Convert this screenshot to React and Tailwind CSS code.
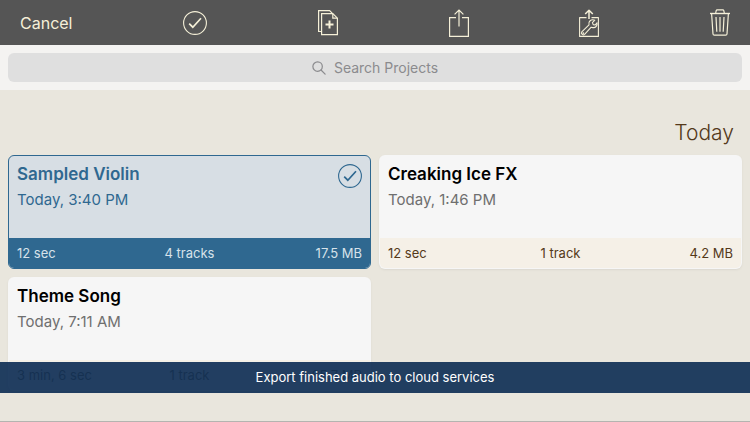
import clsx from 'clsx';

const projects = [
  { name: 'Sampled Violin', date: 'Today, 3:40 PM', length: '12 sec', tracks: '4 tracks', size: '17.5 MB', selected: true },
  { name: 'Creaking Ice FX', date: 'Today, 1:46 PM', length: '12 sec', tracks: '1 track', size: '4.2 MB' },
  { name: 'Theme Song', date: 'Today, 7:11 AM', length: '3 min, 6 sec', tracks: '1 track', size: '65.7 MB' },
];

export default function App() {
  return (
    <div className="relative flex min-h-screen flex-col border-b border-[#b4b4b0] bg-[#e9e6dd] font-['Inter',sans-serif]">
      <header className="flex h-[45px] items-center justify-between bg-[#555555] px-5 text-[#f5f0d8]">
        <button type="button" className="text-base">Cancel</button>
        <ToolButton label="Select all"><CheckCircle /></ToolButton>
        <ToolButton label="Duplicate"><DuplicateIcon /></ToolButton>
        <ToolButton label="Share"><ShareIcon /></ToolButton>
        <ToolButton label="Export options"><ExportIcon /></ToolButton>
        <ToolButton label="Delete"><TrashIcon /></ToolButton>
      </header>

      <SearchBar />

      <main className="px-2 pt-7">
        <h1 className="px-2 text-right text-[21px] leading-[29px] font-light text-[#54391a]">Today</h1>
        <div className="mt-2 grid grid-cols-2 gap-2">
          {projects.map(p => <ProjectCard key={p.name} project={p} />)}
        </div>
      </main>

      {/* Caption lies over the bottom of the list */}
      <p className="absolute inset-x-0 bottom-7 bg-[#113056]/93 text-center text-[13px] leading-[31px] text-white">
        Export finished audio to cloud services
      </p>
    </div>
  );
}

function ToolButton({ label, children }) {
  return <button type="button" aria-label={label} className="flex h-7 items-center">{children}</button>;
}

function SearchBar() {
  return (
    <div className="bg-[#f4f3f1] p-2">
      <label className="flex h-[29px] items-center justify-center gap-2 rounded-md bg-[#dfdfdf] text-[#8b8b8e]">
        <svg className="h-3.5 w-3.5" viewBox="0 0 16 16" fill="none" stroke="currentColor" strokeWidth="1.4" strokeLinecap="round">
          <circle cx="6.4" cy="6.4" r="5.4" />
          <path d="M10.3 10.3 15 15" />
        </svg>
        <input type="search" aria-label="Search Projects" placeholder="Search Projects"
          className="field-sizing-content bg-transparent text-sm outline-none placeholder:text-[#8b8b8e]" />
      </label>
    </div>
  );
}

function ProjectCard({ project }) {
  const { name, date, length, tracks, size, selected } = project;
  return (
    <article className={clsx(
      'overflow-hidden rounded-md border',
      selected ? 'border-[#2f6890] bg-[#d7dee4]' : 'border-transparent bg-[#f6f6f6] shadow-sm shadow-black/5'
    )}>
      <div className="flex h-[82px] items-start justify-between px-2 pt-2">
        <div>
          <h2 className={clsx('text-[17px] leading-5 font-semibold', selected ? 'text-[#2f6890]' : 'text-black')}>{name}</h2>
          <p className={clsx('mt-1 text-[15px] leading-6', selected ? 'text-[#2f6890]' : 'text-[#6f6f6f]')}>{date}</p>
        </div>
        {selected && <span className="text-[#2f6890]"><CheckCircle /></span>}
      </div>
      <div className={clsx('grid h-[30px] grid-cols-3 items-center px-2 pt-0.5 text-[13px]', selected ? 'bg-[#2f6890] text-[#d7e2ea]' : 'bg-[#f5f0e7] text-[#54391a]')}>
        <span>{length}</span>
        <span className="text-center">{tracks}</span>
        <span className="text-right">{size}</span>
      </div>
    </article>
  );
}

function CheckCircle() {
  return (
    <svg className="h-6 w-6" viewBox="0 0 24 24" fill="none" stroke="currentColor">
      <circle cx="12" cy="12" r="11.4" strokeWidth="1.1" />
      <path d="M6.2 12.6 9.8 16.2 18 7.2" strokeWidth="1.7" />
    </svg>
  );
}

function DuplicateIcon() {
  return (
    <svg className="h-[26px] w-5" viewBox="0 0 20 26" fill="none" stroke="currentColor" strokeWidth="1.2">
      <path d="M3.5 21.5H.6V.6H11.6L14.6 3.6" />
      <path d="M3.6 3.6H14.8L19.4 8.2V24.6H3.6Z" />
      <path d="M14.8 3.8V8.2H19.2" />
      <path d="M11.5 10.5V18.5M7.5 14.5H15.5" strokeWidth="2" />
    </svg>
  );
}

function ShareIcon() {
  return (
    <svg className="h-7 w-5" viewBox="0 0 20 28" fill="none" stroke="currentColor" strokeWidth="1.2">
      <path d="M7 8.6H.6V27.4H19.4V8.6H13" />
      <path d="M10 17.5V1M5.6 5.4 10 1 14.4 5.4" />
    </svg>
  );
}

function ExportIcon() {
  return (
    <svg className="h-7 w-5" viewBox="0 0 20 28" fill="none" stroke="currentColor" strokeWidth="1.1" strokeLinejoin="round">
      <path d="M7.5 8.6H.6V27.4H19.4V8.6H12.5" />
      <path d="M10 10V1.2M6.2 5 10 1.2 13.8 5" strokeWidth="1.5" />
      <path d="M15.8 11.2 13.4 13.6 14.2 15.6 16.2 16 18 13.8C18.6 16.4 16.8 19 13.8 18.6L12.2 18.2 5.6 25.4C4.2 26.8 1.4 24.8 2.8 22.8L10 15.8C9 12.6 12 9.8 15.8 11.2Z" />
      <circle cx="4.3" cy="24.1" r=".4" />
    </svg>
  );
}

function TrashIcon() {
  return (
    <svg className="h-[27px] w-5" viewBox="0 0 20 27" fill="none" stroke="currentColor" strokeWidth="1.2">
      <path d="M0 4.5H20" strokeWidth="1.4" />
      <path d="M5.6 4.5 6.2 1.6Q6.4 .8 7.2 .8H12.8Q13.6 .8 13.8 1.6L14.4 4.5" />
      <path d="M1.6 4.5 3 25Q3.1 26.2 4.4 26.2H15.6Q16.9 26.2 17 25L18.4 4.5" />
      <path d="M6 8 6.8 22.8M10 8V22.8M14 8 13.2 22.8" />
    </svg>
  );
}
